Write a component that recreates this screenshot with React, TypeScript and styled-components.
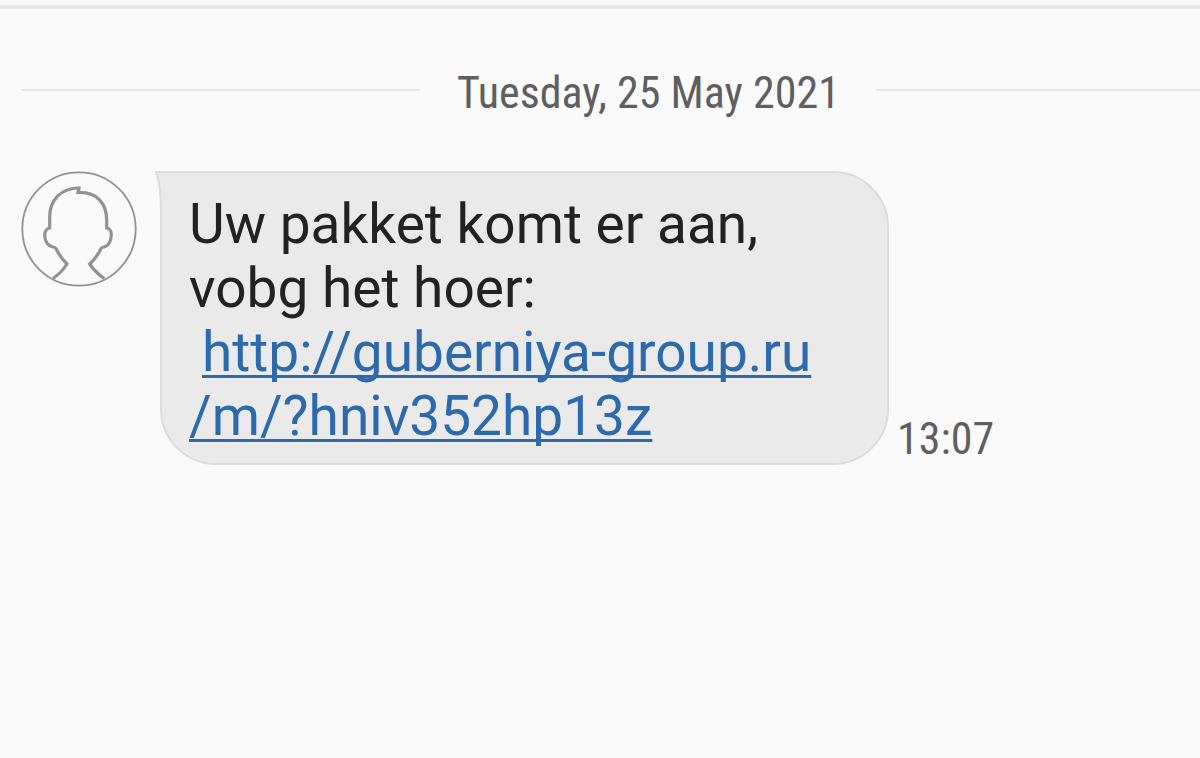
import React from 'react';
import styled, { createGlobalStyle } from 'styled-components';

const GlobalStyle = createGlobalStyle`
  *, *::before, *::after { box-sizing: border-box; }
  body {
    margin: 0;
    background: #fafafa;
    font-family: Roboto, "Liberation Sans", sans-serif;
  }
`;

const Conversation = styled.main`
  display: flex;
  flex-direction: column;
  min-height: 100vh;
  padding-top: 5px;
`;

const TopRule = styled.div`
  height: 4px;
  background: #e8e8e8;
`;

const DateDivider = styled.header`
  display: flex;
  align-items: center;
  padding: 54px 0 0 21px;
`;

const Rule = styled.span<{ $grow: number }>`
  flex: ${(p) => p.$grow} 1 0;
  height: 2px;
  background: #e6e6e6;
`;

const DateLabel = styled.time`
  padding: 6px 36px 0 37px;
  color: #5f5f5f;
  font-family: "Roboto Condensed", Roboto, sans-serif;
  font-size: 44px;
  line-height: 48px;
  white-space: nowrap;
`;

const MessageRow = styled.article`
  display: flex;
  align-items: flex-start;
  padding: 54px 20px 0 21px;
`;

const Avatar = styled.svg`
  flex: none;
  width: 116px;
  height: 116px;
  fill: none;
  stroke: #929292;
`;

const Bubble = styled.div`
  position: relative;
  flex: 0 1 729px;
  min-width: 0;
  margin-left: 23px;
  padding: 19px 28px 15px 27px;
  border: 2px solid #dcdcdc;
  border-radius: 0 56px 56px 56px;
  background: #eaeaea;
`;

const Tail = styled.svg`
  position: absolute;
  top: -2px;
  left: -8px;
  width: 12px;
  height: 44px;
`;

const MessageText = styled.p`
  margin: 0;
  color: #222;
  font-size: 55px;
  line-height: 64px;
`;

const MessageLink = styled.a`
  display: block;
  color: #2c69ad;
  text-indent: 13px;
  text-decoration: underline;
  text-decoration-thickness: 3px;
  text-decoration-skip-ink: none;
  text-underline-offset: 4px;
`;

const SentTime = styled.time`
  align-self: flex-end;
  margin-left: 8px;
  color: #5f5f5f;
  font-family: "Roboto Condensed", Roboto, sans-serif;
  font-size: 44px;
  line-height: 52px;
`;

export default function App() {
  return (
    <>
      <GlobalStyle />
      <Conversation>
        <TopRule />
        <DateDivider>
          <Rule $grow={16} />
          <DateLabel dateTime="2021-05-25">Tuesday, 25 May 2021</DateLabel>
          <Rule $grow={13} />
        </DateDivider>
        <MessageRow>
          <Avatar viewBox="0 0 116 116" role="img" aria-label="Unknown contact">
            <circle cx="58" cy="58" r="56.7" strokeWidth="1.8" />
            <path
              strokeWidth="3.2"
              d="M32 107.500Q41 101 46 93Q39 86 35.500 78.500Q34.500 76 32 76C26 74.500 23.700 69 23.700 64Q24 58 28.700 57V46C28.700 29 40 17 58 17L57 21.500C75 20.500 85.700 32 85.700 49V57Q90.500 58 90.300 64C90 70 88 75 83 76Q80.500 76 79.500 78.500Q76 86 68.700 93Q74 101 83.300 107.500"
            />
          </Avatar>
          <Bubble>
            <Tail viewBox="0 0 12 44" aria-hidden="true">
              <path d="M2 1Q7 12 7 44H12V1Z" fill="#eaeaea" />
              <path d="M12 1H2Q7 12 7 44" fill="none" stroke="#dcdcdc" strokeWidth="2" />
            </Tail>
            <MessageText>
              Uw pakket komt er aan,
              <br />
              vobg het hoer:
              <MessageLink href="http://guberniya-group.ru/m/?hniv352hp13z">
                http://guberniya-group.ru
                <br />
                /m/?hniv352hp13z
              </MessageLink>
            </MessageText>
          </Bubble>
          <SentTime dateTime="13:07">13:07</SentTime>
        </MessageRow>
      </Conversation>
    </>
  );
}
